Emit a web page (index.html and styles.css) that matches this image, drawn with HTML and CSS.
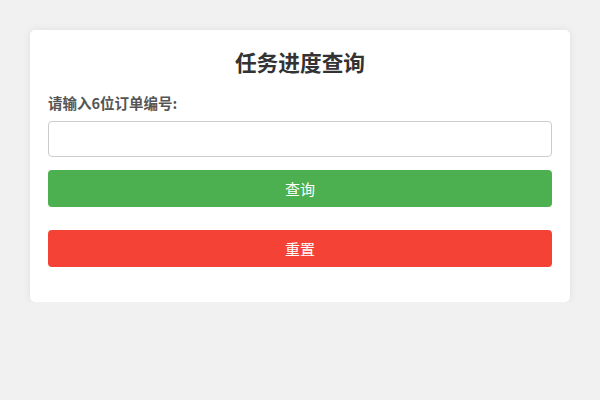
FILE: index.html
```html
<!DOCTYPE html>
<html lang="zh-CN">
<head>
<meta charset="utf-8">
<title>任务进度查询</title>
<link rel="stylesheet" href="styles.css">
</head>
<body>
<div class="card">
  <h2 class="title">任务进度查询</h2>
  <label class="label" for="order">请输入6位订单编号:</label>
  <input class="input" id="order" type="text">
  <button class="btn btn-query" type="button">查询</button>
  <button class="btn btn-reset" type="button">重置</button>
</div>
</body>
</html>
```

FILE: styles.css
```css
html, body {
  margin: 0;
  padding: 0;
  background: #f1f1f1;
  font-family: "Noto Sans CJK SC", "Noto Sans", sans-serif;
}
body {
  padding-top: 30px;
}
.card {
  box-sizing: border-box;
  width: 540px;
  margin: 0 auto;
  background: #fff;
  border-radius: 5px;
  box-shadow: 0 0 8px rgba(0, 0, 0, 0.08);
  padding: 19px 18px 35px;
  display: flex;
  flex-direction: column;
}
.title {
  margin: 0 0 19px;
  font-size: 21.7px;
  line-height: 25px;
  font-weight: 700;
  color: #333;
  text-align: center;
}
.label {
  display: block;
  font-size: 14.5px;
  line-height: 20px;
  font-weight: 700;
  color: #555;
  margin-bottom: 8px;
}
.input {
  box-sizing: border-box;
  height: 36px;
  width: 100%;
  border: 1px solid #ccc;
  border-radius: 4px;
  padding: 0 10px;
  font-size: 15px;
  margin: 0 0 13px;
  outline: none;
}
.btn {
  box-sizing: border-box;
  height: 37px;
  width: 100%;
  border: none;
  border-radius: 4px;
  color: #fff;
  font-family: "Noto Sans CJK SC", "Noto Sans", sans-serif;
  font-size: 15px;
  cursor: pointer;
}
.btn-query {
  background: #4caf50;
  margin-bottom: 23px;
}
.btn-reset {
  background: #f44336;
}
```
